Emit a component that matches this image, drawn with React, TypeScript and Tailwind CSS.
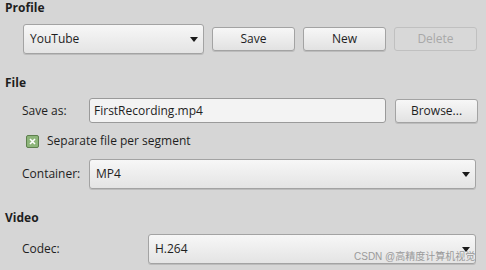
import React from 'react';

const font = { fontFamily: '"Open Sans", "Noto Sans", "Noto Sans CJK SC", sans-serif' };

const Arrow = () => (
  <svg width="8" height="5" viewBox="0 0 8 5" className="shrink-0">
    <path d="M0 0 H8 L4 5 Z" fill="#1a1a1a" />
  </svg>
);

const Combo = ({ value, className }: { value: string; className: string }) => (
  <div
    className={`flex items-center justify-between rounded-[3px] border border-[#a3a3a3] bg-gradient-to-b from-[#f7f7f7] to-[#e4e4e4] pl-[6px] pr-[5px] text-[12px] text-[#1e1e1e] shadow-[0_1px_0_rgba(0,0,0,0.12)] ${className}`}
  >
    <span>{value}</span>
    <Arrow />
  </div>
);

const Btn = ({ label, disabled }: { label: string; disabled?: boolean }) => (
  <div
    className={`flex h-[24px] w-[83px] items-center justify-center rounded-[3px] border text-[12px] ${
      disabled
        ? 'border-[#c0c0c0] bg-[#d8d8d8] text-[#a8a8a8]'
        : 'border-[#a3a3a3] bg-gradient-to-b from-[#f7f7f7] to-[#e2e2e2] text-[#1e1e1e] shadow-[0_1px_0_rgba(0,0,0,0.12)]'
    }`}
  >
    {label}
  </div>
);

const SectionTitle = ({ children }: { children: React.ReactNode }) => (
  <div className="pl-[5px] text-[12px] font-bold leading-[16px] text-[#1e1e1e]">{children}</div>
);

export default function App() {
  return (
    <div className="relative h-[270px] w-[486px] overflow-hidden bg-[#d6d6d6] leading-[16px]" style={font}>
      <SectionTitle>Profile</SectionTitle>
      <div className="mt-[8px] flex items-center pl-[23px]">
        <Combo value="YouTube" className="h-[30px] w-[181px]" />
        <div className="ml-[8px] flex gap-[8px]">
          <Btn label="Save" />
          <Btn label="New" />
          <Btn label="Delete" disabled />
        </div>
      </div>

      <div className="mt-[21px]">
        <SectionTitle>File</SectionTitle>
      </div>
      <div className="mt-[7px] flex h-[25px] items-center pl-[22px]">
        <span className="w-[67px] text-[12px] text-[#1e1e1e]">Save as:</span>
        <div className="flex h-[25px] w-[297px] items-center rounded-[3px] border border-[#9a9a9a] bg-[#f3f3f3] pl-[4px] text-[12px] text-[#1e1e1e]">
          FirstRecording.mp4
        </div>
        <div className="ml-[9px]">
          <Btn label="Browse..." />
        </div>
      </div>
      <div className="mt-[11px] flex h-[14px] items-center pl-[26px]">
        <div className="flex h-[13px] w-[13px] items-center justify-center rounded-[2px] border border-[#5d7f4d] bg-[#8db57a]">
          <svg width="7" height="7" viewBox="0 0 7 7">
            <path d="M1 1 L6 6 M6 1 L1 6" stroke="#ffffff" strokeWidth="1.6" />
          </svg>
        </div>
        <span className="ml-[8px] text-[12px] text-[#1e1e1e]">Separate file per segment</span>
      </div>
      <div className="mt-[11px] flex items-center pl-[22px]">
        <span className="w-[67px] text-[12px] text-[#1e1e1e]">Container:</span>
        <Combo value="MP4" className="h-[30px] w-[387px]" />
      </div>

      <div className="mt-[21px]">
        <SectionTitle>Video</SectionTitle>
      </div>
      <div className="mt-[8px] flex items-center pl-[22px]">
        <span className="w-[126px] text-[12px] text-[#1e1e1e]">Codec:</span>
        <Combo value="H.264" className="h-[30px] w-[328px]" />
      </div>

      <div
        className="absolute left-[354px] top-[250px] whitespace-nowrap text-[10px] leading-[13px] text-[#9a9a9a]"
        style={{ fontFamily: '"Liberation Sans", "Noto Sans CJK SC", sans-serif' }}
      >
        CSDN @高精度计算机视觉
      </div>
    </div>
  );
}
